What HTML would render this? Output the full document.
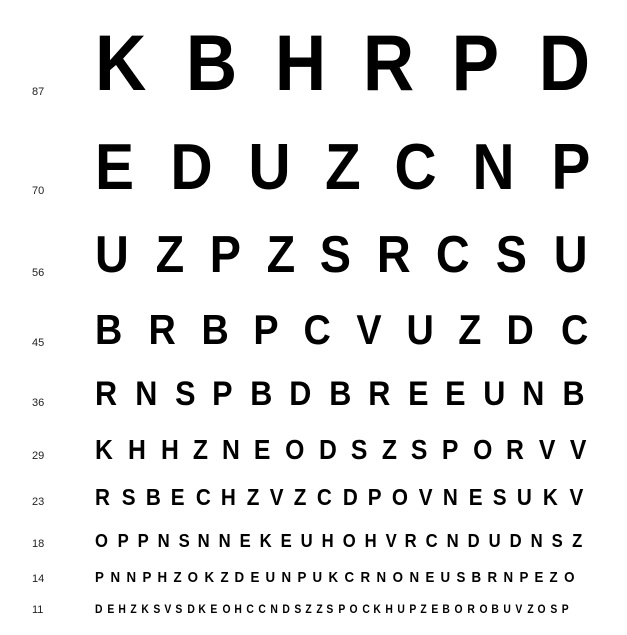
<!DOCTYPE html>
<html><head><meta charset="utf-8"><style>
html,body{margin:0;padding:0;background:#fff;width:627px;height:635px;overflow:hidden;position:relative}
.r{position:absolute;left:95px;display:flex;justify-content:space-between;font-family:"Liberation Sans",Arial,sans-serif;font-weight:bold;line-height:1;color:#000}
.r span{display:inline-block;transform:scaleX(0.9)}
.r span:first-child{transform-origin:left center}
.r span:last-child{transform-origin:right center}
.l{position:absolute;left:32px;font-family:"Liberation Sans",Arial,sans-serif;font-size:11px;line-height:1;color:#222}
</style></head><body>
<div class="l" style="top:86.7px">87</div>
<div class="r" style="top:23px;width:495px;font-size:79px"><span>K</span><span>B</span><span>H</span><span>R</span><span>P</span><span>D</span></div>
<div class="l" style="top:185.7px">70</div>
<div class="r" style="top:134px;width:495px;font-size:65px"><span>E</span><span>D</span><span>U</span><span>Z</span><span>C</span><span>N</span><span>P</span></div>
<div class="l" style="top:267.7px">56</div>
<div class="r" style="top:229px;width:493px;font-size:52px"><span>U</span><span>Z</span><span>P</span><span>Z</span><span>S</span><span>R</span><span>C</span><span>S</span><span>U</span></div>
<div class="l" style="top:337.7px">45</div>
<div class="r" style="top:308.5px;width:493px;font-size:42px"><span>B</span><span>R</span><span>B</span><span>P</span><span>C</span><span>V</span><span>U</span><span>Z</span><span>D</span><span>C</span></div>
<div class="l" style="top:397.7px">36</div>
<div class="r" style="top:376.5px;width:490px;font-size:34px"><span>R</span><span>N</span><span>S</span><span>P</span><span>B</span><span>D</span><span>B</span><span>R</span><span>E</span><span>E</span><span>U</span><span>N</span><span>B</span></div>
<div class="l" style="top:450.7px">29</div>
<div class="r" style="top:435.5px;width:492px;font-size:27.5px"><span>K</span><span>H</span><span>H</span><span>Z</span><span>N</span><span>E</span><span>O</span><span>D</span><span>S</span><span>Z</span><span>S</span><span>P</span><span>O</span><span>R</span><span>V</span><span>V</span></div>
<div class="l" style="top:496.7px">23</div>
<div class="r" style="top:485.5px;width:488px;font-size:23px"><span>R</span><span>S</span><span>B</span><span>E</span><span>C</span><span>H</span><span>Z</span><span>V</span><span>Z</span><span>C</span><span>D</span><span>P</span><span>O</span><span>V</span><span>N</span><span>E</span><span>S</span><span>U</span><span>K</span><span>V</span></div>
<div class="l" style="top:538.7px">18</div>
<div class="r" style="top:532px;width:487px;font-size:18.5px"><span>O</span><span>P</span><span>P</span><span>N</span><span>S</span><span>N</span><span>N</span><span>E</span><span>K</span><span>E</span><span>U</span><span>H</span><span>O</span><span>H</span><span>V</span><span>R</span><span>C</span><span>N</span><span>D</span><span>U</span><span>D</span><span>N</span><span>S</span><span>Z</span></div>
<div class="l" style="top:573.7px">14</div>
<div class="r" style="top:570.5px;width:480px;font-size:14.8px"><span>P</span><span>N</span><span>N</span><span>P</span><span>H</span><span>Z</span><span>O</span><span>K</span><span>Z</span><span>D</span><span>E</span><span>U</span><span>N</span><span>P</span><span>U</span><span>K</span><span>C</span><span>R</span><span>N</span><span>O</span><span>N</span><span>E</span><span>U</span><span>S</span><span>B</span><span>R</span><span>N</span><span>P</span><span>E</span><span>Z</span><span>O</span></div>
<div class="l" style="top:604.7px">11</div>
<div class="r" style="top:604.5px;width:474px;font-size:11.5px"><span>D</span><span>E</span><span>H</span><span>Z</span><span>K</span><span>S</span><span>V</span><span>S</span><span>D</span><span>K</span><span>E</span><span>O</span><span>H</span><span>C</span><span>C</span><span>N</span><span>D</span><span>S</span><span>Z</span><span>Z</span><span>S</span><span>P</span><span>O</span><span>C</span><span>K</span><span>H</span><span>U</span><span>P</span><span>Z</span><span>E</span><span>B</span><span>O</span><span>R</span><span>O</span><span>B</span><span>U</span><span>V</span><span>Z</span><span>O</span><span>S</span><span>P</span></div>
</body></html>
